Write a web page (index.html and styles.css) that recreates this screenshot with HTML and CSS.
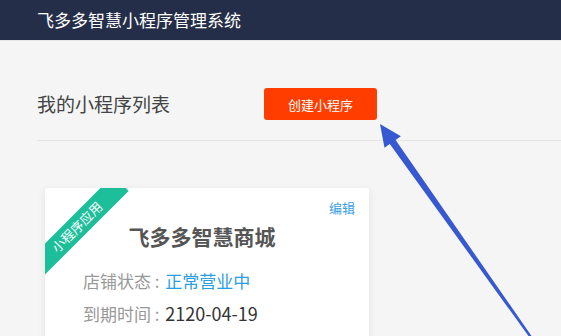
FILE: index.html
```html
<!DOCTYPE html>
<html lang="zh-CN">
<head>
  <meta charset="UTF-8" />
  <meta name="viewport" content="width=device-width, initial-scale=1.0"/>
  <title>飞多多智慧小程序管理系统</title>
  <link rel="stylesheet" href="styles.css">
</head>
<body>
  <div class="topbar">飞多多智慧小程序管理系统</div>

  <div class="content">
    <div class="toolbar">
      <h2 class="page-title">我的小程序列表</h2>
      <button class="btn-create">创建小程序</button>
    </div>

    <div class="app-list">
      <div class="app-card">
        <div class="ribbon">小程序应用</div>
        <div class="card-actions"><a href="#" class="edit-link">编辑</a></div>
        <h3 class="app-name">飞多多智慧商城</h3>
        <div class="info-row"><span class="label">店铺状态 : </span><span class="status">正常营业中</span></div>
        <div class="info-row"><span class="label">到期时间 : </span><span class="value">2120-04-19</span></div>
      </div>
    </div>
  </div>

  <!-- annotation arrow pointing at the create button -->
  <svg class="hint-arrow" width="561" height="336" viewBox="0 0 561 336">
    <polygon fill="#3659d2" points="380,124 400.9,136.2 395.6,140 531.5,336 528.5,336 389.8,144 384.5,147.8"/>
  </svg>
</body>
</html>
```

FILE: styles.css
```css
body {
  margin: 0;
  font-family: "Noto Sans CJK SC", "Noto Sans", sans-serif;
  background: #f5f5f5;
  color: #333;
  overflow: hidden;
}

.topbar {
  height: 40px;
  line-height: 40px;
  padding-left: 37px;
  background: #252e48;
  color: #fff;
  font-size: 17px;
  border-bottom: 1px solid #e8e8e8;
}

.content {
  padding-left: 37px;
}

.toolbar {
  display: flex;
  align-items: center;
  padding: 47px 0 20px;
  border-bottom: 1px solid #e3e3e3;
}

.page-title {
  margin: 0;
  width: 227px;
  font-size: 19px;
  font-weight: normal;
  color: #444;
  line-height: 32px;
}

.btn-create {
  width: 113px;
  height: 32px;
  border: none;
  border-radius: 3px;
  background: #ff3d00;
  color: #fff;
  font-family: inherit;
  font-size: 13px;
  cursor: pointer;
}

.app-list {
  padding: 47px 0 0 8px;
}

.app-card {
  position: relative;
  overflow: hidden;
  width: 324px;
  height: 200px;
  box-sizing: border-box;
  padding: 9px 14px 0 38px;
  background: #fff;
  border-radius: 3px;
  box-shadow: 0 2px 8px rgba(0, 0, 0, 0.08);
}

.ribbon {
  position: absolute;
  left: -30px;
  top: 28px;
  width: 124px;
  height: 22px;
  line-height: 22px;
  text-align: center;
  background: #1dbf9b;
  color: #fff;
  font-size: 13px;
  transform: rotate(-45deg);
}

.card-actions {
  text-align: right;
  line-height: 18px;
}

.edit-link {
  color: #3ca0e6;
  font-size: 13px;
  text-decoration: none;
}

.app-name {
  margin: 4px 0 13px -34px;
  text-align: center;
  font-size: 21px;
  line-height: 30px;
  color: #555;
}

.info-row {
  font-size: 17px;
  line-height: 33px;
}

.label { color: #999; margin-right: 2px; }
.status { color: #2a9ee0; }
.value { color: #333; font-size: 18px; }

.hint-arrow {
  position: absolute;
  left: 0;
  top: 0;
  pointer-events: none;
}
```
